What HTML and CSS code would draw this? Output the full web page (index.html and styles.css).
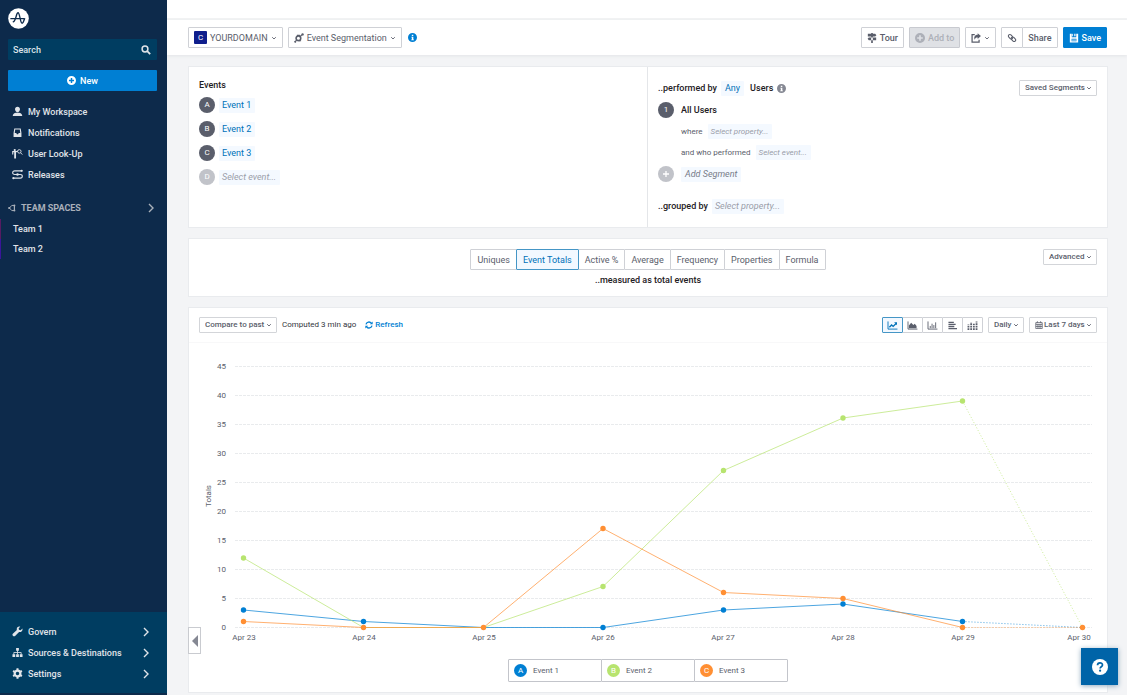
FILE: index.html
```html
<!DOCTYPE html>
<html lang="en">
<head>
<meta charset="utf-8">
<title>Event Segmentation</title>
<meta name="viewport" content="width=device-width, initial-scale=1">
<link rel="stylesheet" href="styles.css">
</head>
<body>
<svg class="defs" aria-hidden="true">
  <symbol id="chev" viewBox="0 0 6 6"><path d="M1.200 2.200L3 4l1.800-1.800" fill="none" stroke="currentColor" stroke-width=".9"/></symbol>
  <symbol id="right" viewBox="0 0 8 10"><path d="M2 1l4 4-4 4" fill="none" stroke="currentColor" stroke-width="1.400"/></symbol>
  <symbol id="plus" viewBox="0 0 16 16"><path fill-rule="evenodd" fill="currentColor" d="M8 0a8 8 0 100 16A8 8 0 008 0zM6.700 3.500h2.600v3.200h3.200v2.600H9.300v3.200H6.700V9.300H3.500V6.700h3.200z"/></symbol>
  <symbol id="info" viewBox="0 0 16 16"><path fill-rule="evenodd" fill="currentColor" d="M8 0a8 8 0 100 16A8 8 0 008 0zM6.800 3h2.600v2.300H6.800zM6 6.500h3.500v5h1V13H5.800v-1.500h1V8H6z"/></symbol>
</svg>
<div class="app">
  <aside class="sidebar">
    <div class="side-top">
      <a class="logo" href="#" aria-label="Home">
        <svg viewBox="0 0 22 22"><circle cx="11" cy="11" r="10.800" fill="#fff"/><path d="M3 11.200h13.500M5.500 14.500c3-1 3-9.500 5-9.500s2.200 11 4.300 11c1.500 0 1.700-3.500 2.700-4.800" fill="none" stroke="#0d2a4b" stroke-width="1.400" stroke-linecap="round"/></svg>
      </a>
      <label class="search">
        <input type="text" placeholder="Search" aria-label="Search">
        <svg viewBox="0 0 10 10"><circle cx="4" cy="4" r="2.900" fill="none" stroke="currentColor" stroke-width="1.500"/><path d="M6.200 6.200L9.200 9.200" stroke="currentColor" stroke-width="1.800"/></svg>
      </label>
      <button class="new" type="button"><svg><use href="#plus"/></svg>New</button>
    </div>
    <nav class="nav">
      <a href="#"><svg viewBox="0 0 12 12"><path d="M6 .8c1.700 0 2.700 1.200 2.700 2.800S7.500 6.800 6 6.800 3.300 5.200 3.300 3.600 4.300.8 6 .8zM.8 11c0-2.600 1.600-3.300 3.700-3.700h3c2.100.4 3.700 1.100 3.700 3.700z" fill="currentColor"/></svg>My Workspace</a>
      <a href="#"><svg viewBox="0 0 12 12"><path fill-rule="evenodd" d="M2.500 1.500h7l.8 5v4.300H1.700V6.500zM3.500 2.700L3 6.500h1.700L5.300 8h1.400l.6-1.500H9l-.5-3.800z" fill="currentColor"/></svg>Notifications</a>
      <a href="#"><svg viewBox="0 0 12 12"><circle cx="3" cy="2.300" r="1.200" fill="currentColor"/><path d="M.8 7V4h3.900l1.500-.8M3 4v7.500M3.800 4v7.500" fill="none" stroke="currentColor" stroke-width="1.200"/><circle cx="8" cy="3.700" r="1.900" fill="none" stroke="currentColor"/><path d="M9.400 5.200l1.900 2" stroke="currentColor"/></svg>User Look-Up</a>
      <a href="#"><svg viewBox="0 0 12 12"><path d="M10 2H3C0 2 0 6 3 6h6c3 0 3 4 0 4H2" fill="none" stroke="currentColor" stroke-width="1.200"/><circle cx="10.600" cy="2" r="1.200" fill="currentColor"/><circle cx="6" cy="6" r="1.400" fill="currentColor"/><circle cx="1.500" cy="10" r="1.200" fill="currentColor"/></svg>Releases</a>
    </nav>
    <section class="teams">
      <button class="teams-head" type="button"><svg class="team-icon" viewBox="0 0 10 10"><path d="M8 1.800H4.700L1.800 5l2.900 3.200H8zM8 1.800v6.400" fill="none" stroke="currentColor" stroke-width="1.200"/><circle cx="8" cy="1.800" r="1.200" fill="currentColor"/><circle cx="8" cy="8.200" r="1.200" fill="currentColor"/><circle cx="1.500" cy="5" r="1.400" fill="currentColor"/></svg>TEAM SPACES<svg class="arrow"><use href="#right"/></svg></button>
      <a class="team team-a" href="#">Team 1</a>
      <a class="team team-b" href="#">Team 2</a>
    </section>
    <nav class="nav nav-bottom">
      <a href="#"><svg viewBox="0 0 12 12"><path d="M11.300 2.800L9.500 4.600 7.600 4.200 7.300 2.400 9 .7C6.500 0 4.700 2 5.300 4.400L.9 8.500c-1.400 1.700 1 3.700 2.500 2.300l4.300-4.300c2.500.6 4.300-1.500 3.600-3.700z" fill="currentColor"/></svg>Govern<svg class="arrow"><use href="#right"/></svg></a>
      <a href="#"><svg viewBox="0 0 12 12"><path d="M4.500 1h3v3h-3zM.5 8h3v3h-3zM4.500 8h3v3h-3zM8.500 8h3v3h-3z" fill="currentColor"/><path d="M6 3v5M2 8.500V6h8v2.500" fill="none" stroke="currentColor" stroke-width=".9"/></svg>Sources &amp; Destinations<svg class="arrow"><use href="#right"/></svg></a>
      <a href="#"><svg viewBox="0 0 12 12"><circle cx="6" cy="6" r="3.100" fill="none" stroke="currentColor" stroke-width="2.400"/><path d="M6 .4v2M6 9.600v2M1.200 3.200l1.700 1M9.100 7.800l1.700 1M10.800 3.200l-1.700 1M2.900 7.800l-1.700 1" stroke="currentColor" stroke-width="2.200"/></svg>Settings<svg class="arrow"><use href="#right"/></svg></a>
    </nav>
  </aside>

  <div class="page">
    <div class="strip"></div>
    <header class="header">
      <button class="btn project" type="button"><span class="badge">C</span>YOURDOMAIN<svg class="chev"><use href="#chev"/></svg></button>
      <button class="btn" type="button"><svg viewBox="0 0 12 12"><circle cx="5.300" cy="6.200" r="2.800" fill="none" stroke="currentColor" stroke-width="1.900"/><path d="M1 11l2.500-3M7 4.300L10 2M3.500 2.800h3.500M5 9.300h3.500" stroke="currentColor" stroke-width="1.300"/><circle cx="10.300" cy="1.700" r="1.400" fill="currentColor"/><circle cx="1.500" cy="10.600" r="1.200" fill="currentColor"/></svg>Event Segmentation<svg class="chev"><use href="#chev"/></svg></button>
      <svg class="info info-blue"><use href="#info"/></svg>
      <div class="actions">
        <button class="btn" type="button"><svg viewBox="0 0 12 12"><path d="M1 .9h8.800l1.500 1.700-1.500 1.700H1zM11 5.300H2.200L.7 7l1.500 1.700H11zM5 0h2v12H5z" fill="currentColor"/></svg>Tour</button>
        <button class="btn" type="button" disabled><svg><use href="#plus"/></svg>Add to</button>
        <button class="btn" type="button" aria-label="Export"><svg viewBox="0 0 12 12"><path d="M4.500 2H1.300v8.900h8.400V8" fill="none" stroke="currentColor" stroke-width="1.500"/><path d="M8 .3l3.900 3.400L8 7.200V5.300C5.800 5.300 5 6 4.500 8 2.900 5 4.800 2.200 8 2.200z" fill="currentColor"/></svg><svg class="chev"><use href="#chev"/></svg></button>
        <div class="group">
          <button class="btn" type="button" aria-label="Copy link"><svg viewBox="0 0 12 12"><g fill="none" stroke="currentColor" stroke-width="1.300"><rect x="1.300" y="2.700" width="6" height="3.600" rx="1.800" transform="rotate(45 4.300 4.500)"/><rect x="4.700" y="5.700" width="6" height="3.600" rx="1.800" transform="rotate(45 7.700 7.500)"/></g></svg></button>
          <button class="btn" type="button">Share</button>
        </div>
        <button class="btn save" type="button"><svg viewBox="0 0 12 12"><path fill-rule="evenodd" d="M1 1h2.300v4h5.400V1H11v10.500H1zM3 7v3h6V7zM6.300 1h1.500v3H6.300z" fill="currentColor"/><path d="M3 8.500h6M4.300 1v3" stroke="currentColor"/></svg>Save</button>
      </div>
    </header>

    <main class="content">
      <section class="panel query">
        <div class="events">
          <h2>Events</h2>
          <div class="event"><span class="dot">A</span><button class="chip" type="button">Event 1</button></div>
          <div class="event"><span class="dot">B</span><button class="chip" type="button">Event 2</button></div>
          <div class="event"><span class="dot">C</span><button class="chip" type="button">Event 3</button></div>
          <div class="event"><span class="dot muted">D</span><button class="chip ghost" type="button">Select event...</button></div>
        </div>
        <div class="segments">
          <div class="row"><strong>..performed by</strong><button class="chip any" type="button">Any</button><strong>Users</strong><svg class="info"><use href="#info"/></svg>
            <label class="select saved"><select aria-label="Saved Segments"><option>Saved Segments</option></select><svg class="chev"><use href="#chev"/></svg></label></div>
          <div class="row lead"><span class="dot">1</span><strong>All Users</strong></div>
          <div class="row sub"><span>where</span><button class="chip ghost" type="button">Select property...</button></div>
          <div class="row sub"><span>and who performed</span><button class="chip ghost" type="button">Select event...</button></div>
          <div class="row lead"><span class="dot muted add"><svg viewBox="0 0 8 8"><path d="M4 1v6M1 4h6" stroke="currentColor" stroke-width="1.300"/></svg></span><button class="chip ghost add-segment" type="button">Add Segment</button></div>
          <div class="row grouped"><strong>..grouped by</strong><button class="chip ghost" type="button">Select property...</button></div>
        </div>
      </section>

      <section class="panel measure">
        <div></div>
        <div class="measure-main">
          <div class="group tabs">
            <button class="btn" type="button">Uniques</button>
            <button class="btn active" type="button">Event Totals</button>
            <button class="btn" type="button">Active %</button>
            <button class="btn" type="button">Average</button>
            <button class="btn" type="button">Frequency</button>
            <button class="btn" type="button">Properties</button>
            <button class="btn" type="button">Formula</button>
          </div>
          <strong>..measured as total events</strong>
        </div>
        <label class="select"><select aria-label="Advanced"><option>Advanced</option></select><svg class="chev"><use href="#chev"/></svg></label>
      </section>

      <section class="panel results">
        <div class="toolbar">
          <label class="select"><select aria-label="Compare to past"><option>Compare to past</option></select><svg class="chev"><use href="#chev"/></svg></label>
          <span class="computed">Computed 3 min ago</span>
          <button class="refresh" type="button"><svg viewBox="0 0 12 12"><path d="M1.500 5A4.500 4.500 0 019.500 3.300M10.500 7a4.500 4.500 0 01-8 1.700" fill="none" stroke="currentColor" stroke-width="2"/><path d="M11.500.8V5H7.300zM.5 11.200V7h4.200z" fill="currentColor"/></svg>Refresh</button>
          <div class="tools">
            <div class="group kinds">
              <button class="btn active" type="button" aria-label="Line chart"><svg viewBox="0 0 12 10"><path d="M1 .5v8.500h10.500" fill="none" stroke="currentColor"/><path d="M2.500 7L5 4.500l1.700 1.500L10 2.700" fill="none" stroke="currentColor" stroke-width="1.500"/><path d="M7.800 1.500H11v3.200z" fill="currentColor"/></svg></button>
              <button class="btn" type="button" aria-label="Area chart"><svg viewBox="0 0 12 10"><path d="M1 .5v8.500h10.500" fill="none" stroke="currentColor"/><path d="M2 8V5l2.500-3L7 4.500 8.500 3l2 2.500V8z" fill="currentColor"/></svg></button>
              <button class="btn" type="button" aria-label="Bar chart"><svg viewBox="0 0 12 10"><path d="M1 .5v8.500h10.500M3.500 8V5.500M5.500 8V3M7.500 8V4.500M9.500 8V1.500" fill="none" stroke="currentColor"/></svg></button>
              <button class="btn" type="button" aria-label="Horizontal bars"><svg viewBox="0 0 12 10"><path d="M1.500 1.500h6M1.500 3.800h8M1.500 6.100h6.500M1.500 8.400h9.500" stroke="currentColor" stroke-width="1.500"/></svg></button>
              <button class="btn" type="button" aria-label="Stacked bars"><svg viewBox="0 0 12 10"><path d="M1.500 10V4M4.500 10V1.500M7.500 10V3M10.500 10V.5" stroke="currentColor" stroke-width="2" stroke-dasharray="2 .8"/></svg></button>
            </div>
            <label class="select"><select aria-label="Interval"><option>Daily</option></select><svg class="chev"><use href="#chev"/></svg></label>
            <label class="select"><svg class="calendar" viewBox="0 0 10 10"><path d="M1 2h8v7.500H1zM1 4.200h8M1 6.800h8M3.700 4v5.500M6.300 4v5.500M3 .3v2M7 .3v2" fill="none" stroke="currentColor"/></svg><select aria-label="Date range"><option>Last 7 days</option></select><svg class="chev"><use href="#chev"/></svg></label>
          </div>
        </div>
        <svg class="chart" viewBox="189 344 918 306" role="img" aria-label="Event totals by day">
          <path class="grid" d="M235 367H1092M235 396H1092M235 425H1092M235 454H1092M235 483H1092M235 512H1092M235 541H1092M235 570H1092M235 599H1092M235 628.500H1092"/>
          <g class="y-labels">
            <text x="226" y="370">45</text><text x="226" y="399">40</text><text x="226" y="428">35</text><text x="226" y="457">30</text><text x="226" y="486">25</text><text x="226" y="515">20</text><text x="226" y="544">15</text><text x="226" y="573">10</text><text x="226" y="602">5</text><text x="226" y="631">0</text>
          </g>
          <text transform="translate(211 508) rotate(-90)">Totals</text>
          <g class="x-labels">
            <text x="244" y="641">Apr 23</text><text x="364" y="641">Apr 24</text><text x="484" y="641">Apr 25</text><text x="603" y="641">Apr 26</text><text x="723" y="641">Apr 27</text><text x="843" y="641">Apr 28</text><text x="963" y="641">Apr 29</text><text x="1079" y="641">Apr 30</text>
          </g>
          <g class="series blue"><path d="M243.500 611L363.500 622.500 483.500 628.500H603L723.500 611 843 605 962.500 622.500"/><path class="partial" d="M962.500 622.500L1082.500 628.500"/>
            <circle cx="243.500" cy="611" r="2.700"/><circle cx="363.500" cy="622.500" r="2.700"/><circle cx="603" cy="628.500" r="2.700"/><circle cx="723.500" cy="611" r="2.700"/><circle cx="843" cy="605" r="2.700"/><circle cx="962.500" cy="622.500" r="2.700"/></g>
          <g class="series green"><path d="M243.500 559L363.500 628.500H483.500L603 587.500 723.500 471.500 843 419 962.500 402"/><path class="partial" d="M962.500 402L1082.500 628.500"/>
            <circle cx="243.500" cy="559" r="2.700"/><circle cx="603" cy="587.500" r="2.700"/><circle cx="723.500" cy="471.500" r="2.700"/><circle cx="843" cy="419" r="2.700"/><circle cx="962.500" cy="402" r="2.700"/></g>
          <g class="series orange"><path d="M243.500 622.500L363.500 628.500H483.500L603 529.500 723.500 593.500 843 599.500 962.500 628.500"/><path class="partial" d="M962.500 628.500H1082.500"/>
            <circle cx="243.500" cy="622.500" r="2.700"/><circle cx="363.500" cy="628.500" r="2.700"/><circle cx="483.500" cy="628.500" r="2.700"/><circle cx="603" cy="529.500" r="2.700"/><circle cx="723.500" cy="593.500" r="2.700"/><circle cx="843" cy="599.500" r="2.700"/><circle cx="962.500" cy="628.500" r="2.700"/><circle cx="1082.500" cy="628.500" r="2.700"/></g>
        </svg>
        <div class="group legend">
          <button class="btn" type="button"><span class="key key-blue">A</span>Event 1</button>
          <button class="btn" type="button"><span class="key key-green">B</span>Event 2</button>
          <button class="btn" type="button"><span class="key key-orange">C</span>Event 3</button>
        </div>
        <button class="collapse" type="button" aria-label="Show panel"><svg viewBox="0 0 6 12"><path d="M6 0v12L0 6z" fill="currentColor"/></svg></button>
      </section>
    </main>
  </div>
</div>
<button class="help" type="button" aria-label="Help"><svg viewBox="0 0 16 16"><circle cx="8" cy="8" r="8" fill="#fff"/><path d="M5.500 6.300c0-3.200 5-3.200 5-.3 0 1.700-2.400 1.700-2.400 3.400" fill="none" stroke="#0064a8" stroke-width="1.700"/><circle cx="8.100" cy="11.700" r="1.100" fill="#0064a8"/></svg></button>
</body>
</html>
```
FILE: styles.css
```css
* { box-sizing: border-box; }
body {
  margin: 0;
  background: #f3f4f6;
  color: #5a5e6b;
  font: 9px/14px Roboto, "Liberation Sans", sans-serif;
}
button, input, select { font: inherit; color: inherit; margin: 0; padding: 0; border: 0; background: none; }
button { cursor: pointer; white-space: nowrap; }
a { color: inherit; text-decoration: none; }
svg { display: block; flex: none; }
h2 { margin: 0 0 1px; font-size: 9px; font-weight: 500; color: #1e2024; }
strong { font-weight: 500; color: #1e2024; white-space: nowrap; }
.defs { position: absolute; width: 0; height: 0; }

.app { display: flex; min-height: 100vh; }

/* Sidebar */
.sidebar { position: relative; flex: none; width: 167px; display: flex; flex-direction: column; background: #0d2a4b; color: #e0e4e9; font-weight: 500; }
.side-top { padding: 8px 10px 10px 8px; display: flex; flex-direction: column; gap: 10px; }
.logo { align-self: flex-start; }
.logo svg { width: 21px; height: 21px; }
.search { display: flex; align-items: center; height: 21px; padding: 0 6px 0 5px; border-radius: 1px; background: #003d61; }
.search input { flex: 1; min-width: 0; outline: 0; }
.search input::placeholder { color: #dbe3e9; opacity: 1; }
.search svg { width: 10px; height: 10px; }
.new { display: flex; align-items: center; justify-content: center; gap: 4px; height: 21px; border-radius: 1px; background: #007fd3; color: #fff; }
.new svg { width: 9px; height: 9px; }
.nav a { display: flex; align-items: center; gap: 5px; height: 21px; padding: 0 17px 0 12px; }
.nav svg { width: 11px; height: 11px; }
.nav .arrow, .teams .arrow { width: 8px; height: 10px; margin-left: auto; }
.teams { margin-top: 12px; }
.teams-head { display: flex; align-items: center; gap: 5px; width: 100%; height: 22px; padding: 0 12px 0 8px; color: #a9b0ba; font-weight: 700; }
.team-icon { width: 8px; height: 8px; }
.team { display: block; height: 20px; padding-left: 12px; line-height: 20px; border-left: 1px solid; }
.team-a { border-color: #561b62; }
.team-b { border-color: #3a159a; }
.nav-bottom { margin-top: auto; padding: 9px 0; background: #003d61; border-bottom: 2px solid #0d2a4b; }

/* Header */
.page { flex: 1; min-width: 0; display: flex; flex-direction: column; }
.strip { height: 20px; background: #fff; border-bottom: 2px solid #f2f3f4; }
.header { display: flex; align-items: center; gap: 5px; height: 35px; padding: 0 20px 0 21px; background: #fff; box-shadow: 0 1px 3px #e2e4e7; }
.btn { display: flex; align-items: center; justify-content: center; gap: 3px; height: 21px; padding: 0 5px; border: 1px solid #cfd1d6; border-radius: 1px; background: #fff; }
.btn svg { width: 10px; height: 10px; }
.btn .chev, .select .chev { width: 6px; height: 6px; }
.badge { width: 13px; height: 13px; border-radius: 1px; background: #0f1e8c; color: #fff; font-size: 8px; line-height: 13px; }
.info { width: 9px; height: 9px; color: #858893; }
.info-blue { color: #007fd3; margin-left: 1px; }
.actions { display: flex; gap: 5px; margin-left: auto; }
.actions .btn { font-weight: 500; }
.btn:disabled { background: #dfe1e5; border-color: #c8cad0; color: #adb0b8; }
.btn.save { background: #007fd3; border-color: #007fd3; color: #fff; }
.group { display: flex; }
.group .btn + .btn { margin-left: -1px; }
.group .active { position: relative; border-color: #4596c6; background: #f2f8ff; color: #0071b8; }

/* Panels */
.content { flex: 1; display: flex; flex-direction: column; gap: 10px; padding: 11px 19px 2px 21px; }
.panel { background: #fff; border: 1px solid #e9ebee; }
.query { display: grid; grid-template-columns: 1fr 1fr; }
.events { padding: 11px 10px; border-right: 1px solid #e4e6e9; }
.event { display: flex; align-items: center; gap: 4px; height: 24px; }
.dot { flex: none; width: 16px; height: 16px; border-radius: 50%; background: #5a5e6b; color: #fff; font-size: 8px; line-height: 16px; text-align: center; }
.muted { background: #c1c3c9; }
.chip { height: 15px; padding: 0 4px 0 3px; border-radius: 1px; background: #f4f9ff; color: #0071b8; }
.ghost { color: #9a9da9; font-style: italic; }
.segments { padding: 10px; }
.row { display: flex; align-items: center; gap: 4px; height: 22px; }
.row .any { padding: 0 4px; margin-right: 2px; }
.lead { gap: 7px; }
.sub { height: 21px; padding-left: 23px; font-size: 8px; gap: 5px; }
.grouped { margin-top: 10px; }
.add { display: flex; align-items: center; justify-content: center; }
.add svg { width: 8px; height: 8px; }
.add-segment { padding: 0 4px; color: #777b88; }
.select { display: inline-flex; align-items: center; gap: 1px; height: 16px; padding: 0 4px 0 5px; border: 1px solid #d3d5d9; border-radius: 1px; background: #fff; font-size: 8px; font-weight: 500; }
.select select { appearance: none; outline: 0; }
.saved { margin-left: auto; }
.calendar { width: 8px; height: 8px; }

.measure { display: grid; grid-template-columns: 1fr auto 1fr; padding: 10px 10px 9px; }
.measure > .select { justify-self: end; align-self: start; }
.measure-main { display: flex; flex-direction: column; align-items: center; gap: 3px; }
.tabs .btn { padding: 0 6px; }

.results { position: relative; display: flex; flex-direction: column; }
.toolbar { display: flex; align-items: center; height: 35px; padding: 0 10px; font-size: 8px; border-bottom: 1px solid #f8f8f9; }
.computed { margin: 0 9px 0 5px; color: #33363c; }
.refresh { display: flex; align-items: center; gap: 2px; color: #007fd3; font-weight: 500; }
.refresh svg { width: 8px; height: 8px; }
.tools { display: flex; gap: 5px; margin-left: auto; }
.kinds .btn { width: 21px; height: 16px; padding: 0; }
.kinds svg { width: 11px; height: 9px; }

/* Chart */
.chart { width: 100%; height: auto; }
.chart text { fill: #5a5e6b; font-size: 8px; }
.grid { stroke: #e9ebed; stroke-dasharray: 3 1; fill: none; shape-rendering: crispEdges; }
.y-labels { text-anchor: end; }
.x-labels { text-anchor: middle; }
.series path { fill: none; stroke-width: 1; opacity: .7; }
.series .partial { stroke-dasharray: 1 2; }
.blue { stroke: #007fd3; fill: #007fd3; }
.green { stroke: #b7e46f; fill: #b7e46f; }
.orange { stroke: #ff8f33; fill: #ff8f33; }
.series circle { stroke: none; }
.legend { align-self: center; margin: 10px 0; }
.legend .btn { width: 94px; height: 23px; justify-content: flex-start; gap: 6px; font-size: 8px; border-color: #c3c5cb; }
.key { width: 13px; height: 13px; border-radius: 50%; color: #fff; font-size: 8px; line-height: 13px; }
.key-blue { background: #007fd3; }
.key-green { background: #b7e46f; }
.key-orange { background: #ff8f33; }
.collapse { position: absolute; left: -1px; bottom: 38px; width: 13px; height: 27px; display: flex; align-items: center; justify-content: center; border: 1px solid #c9cbd0; background: #fff; color: #858893; }
.collapse svg { width: 6px; height: 12px; }
.help { position: fixed; right: 9px; bottom: 10px; width: 37px; height: 37px; display: flex; align-items: center; justify-content: center; background: #0064a8; box-shadow: 0 1px 5px #8fa9bd; }
.help svg { width: 16px; height: 16px; }
```
